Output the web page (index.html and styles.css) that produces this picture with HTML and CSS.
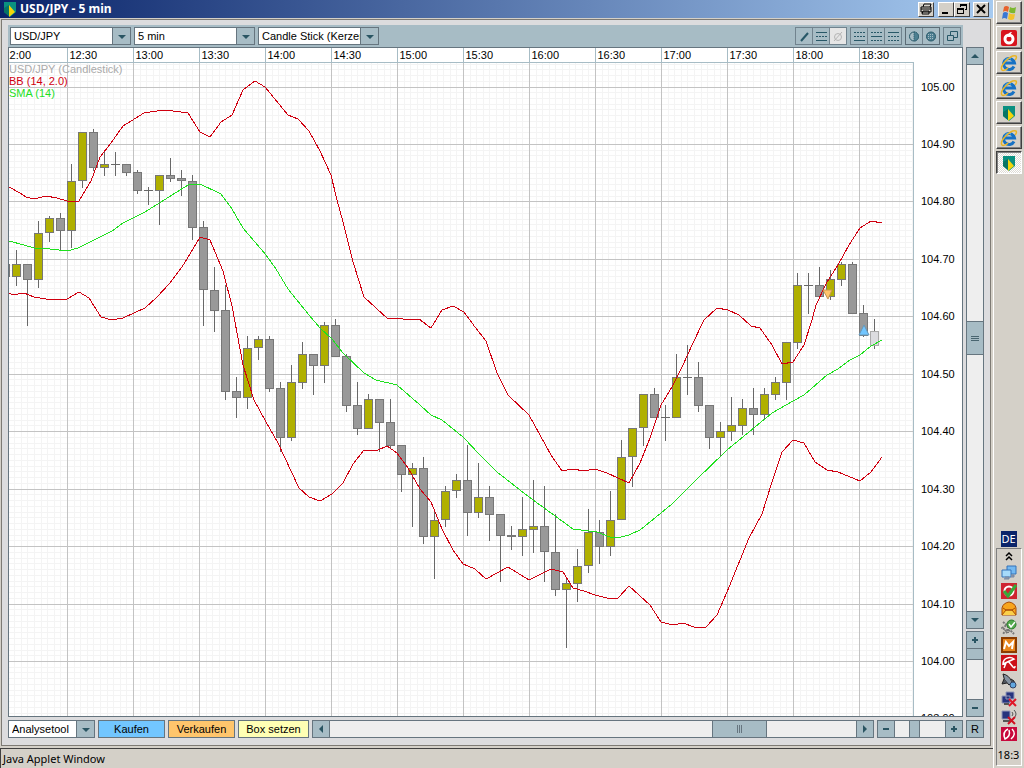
FILE: index.html
```
<!DOCTYPE html>
<html lang="de">
<head>
  <meta charset="UTF-8">
  <title>USD/JPY - 5 min</title>
  <link rel="stylesheet" href="styles.css">
</head>
<body>

  <svg class="defs" aria-hidden="true">
    <symbol id="shield" viewBox="1 0 14 16">
      <path d="M2 1h12v10l-6 5-6-5z" fill="#0a9080"/>
      <path d="M7 4l6 7-6 5z" fill="#f4d50a"/>
      <path d="M7 4v11l-5-4V7z" fill="#087564"/>
    </symbol>
    <symbol id="ie" viewBox="0 0 18 18">
      <path d="M14 12.500A5.500 5.500 0 1 1 14.500 9H5" fill="none" stroke="#1672c4" stroke-width="3"/>
      <path d="M5 7a4 4 0 0 1 6-2" fill="none" stroke="#6cc4f4" stroke-width="1"/>
      <path d="M2 16C-1 12 11 0 16 2c1 1 0 3-1 4M2 16c1 1 4 0 6-2" fill="none" stroke="#e9b526" stroke-width="1.500"/>
    </symbol>
  </svg>

  <main class="window">
    <header class="titlebar">
      <svg class="title-icon"><use href="#shield"/></svg>
      <h1>USD/JPY - 5 min</h1>
      <button class="win-btn win-print" aria-label="Drucken">
        <svg viewBox="0 0 14 12"><path d="M4 4l1-3h7l-1 3M2 4h10v5H2zM2 6h10M4 8h6v3H3z" fill="none" stroke="#000"/></svg>
      </button>
      <button class="win-btn" aria-label="Minimieren">
        <svg viewBox="0 0 14 12"><path d="M3 9h6v2H3z"/></svg>
      </button>
      <button class="win-btn" aria-label="Wiederherstellen">
        <svg viewBox="0 0 14 12"><path d="M5 1h7v6h-2V6h1V3H6v1H5zM2 5h7v6H2zm1 2v3h5V7z" fill-rule="evenodd"/></svg>
      </button>
      <button class="win-btn win-close" aria-label="Schließen">
        <svg viewBox="0 0 14 12"><path d="M3 2l8 8M11 2l-8 8" stroke="#000" stroke-width="2"/></svg>
      </button>
    </header>

    <section class="panel">
      <div class="toolbar">
        <span class="combo"><select aria-label="Instrument"><option>USD/JPY</option></select></span>
        <span class="combo"><select aria-label="Intervall"><option>5 min</option></select></span>
        <span class="combo"><select aria-label="Darstellung"><option>Candle Stick (Kerzenchart)</option></select></span>
        <div class="tools">
          <div class="tool-group">
            <button aria-label="Linie"><svg viewBox="0 0 16 16"><path d="M5 13l7-8" stroke-width="2"/></svg></button>
            <button aria-label="Kanal"><svg viewBox="0 0 16 16"><path d="M3 4.500h11M3 12.500h11"/><path d="M3 8.500h11" stroke-dasharray="2 1"/></svg></button>
            <button aria-label="Entfernen" disabled><svg viewBox="0 0 16 16"><circle cx="8" cy="9" r="3.500"/><path d="M4 13l8-9"/></svg></button>
          </div>
          <div class="tool-group">
            <button aria-label="Unten"><svg viewBox="0 0 16 16"><path d="M3 4.500h11M3 8.500h11" stroke-dasharray="2 1"/><path d="M3 12.500h11"/></svg></button>
            <button aria-label="Mitte"><svg viewBox="0 0 16 16"><path d="M3 4.500h11M3 12.500h11" stroke-dasharray="2 1"/><path d="M3 8.500h11"/></svg></button>
            <button aria-label="Oben"><svg viewBox="0 0 16 16"><path d="M3 8.500h11M3 12.500h11" stroke-dasharray="2 1"/><path d="M3 4.500h11"/></svg></button>
          </div>
          <div class="tool-group dark">
            <button aria-label="Halb"><svg viewBox="0 0 16 16"><circle cx="8" cy="8.500" r="4.500"/><path d="M8 4a4.500 4.500 0 0 1 0 9z" fill="#4d7f91" stroke-dasharray="1 1"/></svg></button>
            <button aria-label="Voll"><svg viewBox="0 0 16 16"><circle cx="8" cy="8.500" r="4.500" fill="#4d7f91"/><path d="M5 6.500h6M5 8.500h6M5 10.500h6" stroke="#a7bcc5" stroke-dasharray="1 1"/></svg></button>
          </div>
          <div class="tool-group">
            <button aria-label="Fenster"><svg viewBox="0 0 16 16"><path d="M6.500 7V3.500h7v6H10M3.500 7.500h6v5h-6z"/></svg></button>
          </div>
        </div>
      </div>

      <svg id="chart" class="chart"></svg>

      <div class="side">
        <div class="scroll vertical">
          <button class="up" aria-label="Nach oben"></button>
          <input type="range" class="scroll-v" aria-label="Preis verschieben" value="50">
          <button class="down" aria-label="Nach unten"></button>
        </div>
        <div class="scroll vertical zoom-v">
          <button class="plus" aria-label="Höhe vergrößern"></button>
          <input type="range" aria-label="Preis zoomen" value="0">
          <button class="minus" aria-label="Höhe verkleinern"></button>
        </div>
      </div>

      <div class="actions">
        <span class="combo tool-combo"><select aria-label="Analysetool"><option>Analysetool</option></select></span>
        <button class="action buy">Kaufen</button>
        <button class="action sell">Verkaufen</button>
        <button class="action box">Box setzen</button>
        <div class="scroll time-scroll">
          <button class="left" aria-label="Zurück"></button>
          <input type="range" class="scroll-h" aria-label="Zeit verschieben" value="81">
          <button class="right" aria-label="Weiter"></button>
        </div>
        <div class="scroll zoom-h">
          <button class="minus" aria-label="Breite verkleinern"></button>
          <input type="range" aria-label="Zeit zoomen" value="36">
          <button class="plus" aria-label="Breite vergrößern"></button>
        </div>
      </div>
      <button class="reset">R</button>
    </section>

    <footer class="status">Java Applet Window</footer>
  </main>

  <aside class="taskbar">
    <button class="task" aria-label="Start"><svg viewBox="0 0 18 18"><path d="M4 3q2-2 5 0L8 8Q5 6 3 8z" fill="#e8622c"/><path d="M10 3q3 2 6 0l-1 6q-3 1-6-1z" fill="#7cb82f"/><path d="M3 9q2-2 5 0l-1 6q-3-2-5 0z" fill="#3a78d4"/><path d="M9 9q3 2 6 1l-1 5q-3 2-6 0z" fill="#f2c22c"/></svg></button>
    <button class="task" aria-label="Vodafone"><svg viewBox="0 0 18 18"><rect x="1" y="1" width="16" height="16" rx="2" fill="#d8141c"/><circle cx="9" cy="10" r="4" fill="none" stroke="#fff" stroke-width="3"/><path d="M8 8q0-5 4-5-2 2-2 5" fill="#fff"/></svg></button>
    <button class="task" aria-label="Internet Explorer"><svg><use href="#ie"/></svg></button>
    <button class="task" aria-label="Internet Explorer"><svg><use href="#ie"/></svg></button>
    <button class="task" aria-label="Trading"><svg class="small"><use href="#shield"/></svg></button>
    <button class="task" aria-label="Internet Explorer"><svg><use href="#ie"/></svg></button>
    <button class="task pressed" aria-label="USD/JPY"><svg class="small"><use href="#shield"/></svg></button>

    <div class="lang">DE</div>
    <div class="tray">
      <svg class="chevrons" viewBox="0 0 16 10"><path d="M5 5l3-3 3 3M5 9l3-3 3 3" fill="none" stroke="#000" stroke-width="1.500"/></svg>
      <svg viewBox="0 0 16 16"><path d="M6 1h9v8H6z" fill="#73b9f2" stroke="#3472b8"/><path d="M1 5h9v7H1z" fill="#a6dafa" stroke="#3472b8"/><path d="M4 12h4v2H3M10 10h3v2h-3" fill="#8a98b0" stroke="#7888a0"/></svg>
      <svg viewBox="0 0 16 16"><path d="M0 0h16v16H0z" fill="#cf2430"/><circle cx="8" cy="8" r="4.500" fill="none" stroke="#fff" stroke-width="2"/><path d="M3 8l4 5 8-11" fill="none" stroke="#38a838" stroke-width="3"/></svg>
      <svg viewBox="0 0 16 16"><path d="M1 7q1-5 7-6 6 1 7 6v7H1z" fill="#f8a51c" stroke="#a84b04"/><path d="M1 14l4-5h6l4 5" fill="#fbd04a" stroke="#a84b04"/><path d="M2 7l3 2h6l3-2" fill="none" stroke="#a84b04"/></svg>
      <svg viewBox="0 0 16 16"><path d="M2 3l4 3-5 3 4 2-3 4M7 7v7M5 14l4-3 4 4" fill="none" stroke="#777" stroke-width="2" stroke-dasharray="2 1"/><circle cx="10.500" cy="5.500" r="4.500" fill="#52a94b" stroke="#2c7c2c"/><path d="M8 5l2 3 4-5" fill="none" stroke="#fff" stroke-width="1.500"/></svg>
      <svg viewBox="0 0 16 16"><rect x="1" y="1" width="14" height="14" fill="#e8851c" stroke="#8b3c00" stroke-width="2"/><path d="M3 12l2-7 3 4 4-4-1 7" fill="none" stroke="#fff" stroke-width="2"/></svg>
      <svg viewBox="0 0 16 16"><path d="M0 0h16v16H0z" fill="#cc1018"/><path d="M2 9C2 3 9 1 13 4zM7 6l5 6q2 2 2-1M5 8l-2 5" fill="none" stroke="#fff" stroke-width="1.500"/></svg>
      <svg viewBox="0 0 16 16"><path d="M2 1q6 1 9 8l-3 3Q2 7 2 1z" fill="#8492a0" stroke="#222"/><path d="M3 6l-2 5 5-1M10 6l3 2 1 5-3-2" fill="#50565e" stroke="#222"/><circle cx="12" cy="12" r="3" fill="#62a8e0" stroke="#346"/></svg>
      <svg viewBox="0 0 16 16"><path d="M5 1h8v7H5zM1 5h8v7H1z" fill="#26347e" stroke="#9298b8"/><path d="M3 13h5" stroke="#555" stroke-width="2"/><path d="M8 8l7 7M15 8l-7 7" stroke="#e01828" stroke-width="2"/></svg>
      <svg viewBox="0 0 16 16"><path d="M1 2h8v8H1z" fill="#26347e" stroke="#9298b8"/><path d="M2 12h7" stroke="#555" stroke-width="2"/><path d="M11 3q2 2 0 4M13 1q4 4 0 8" fill="none" stroke="#555"/><path d="M7 8l7 7M14 8l-7 7" stroke="#d01020" stroke-width="2"/></svg>
      <svg viewBox="0 0 16 16"><path d="M0 0h16v14H0z" fill="#c8083c"/><path d="M7 2Q1 5 4 12q6-3 4-9M11 2q5 5-1 10" fill="none" stroke="#fff" stroke-width="1.500"/></svg>
      <time>18:3</time>
    </div>
  </aside>

  <script src="chart.js"></script>
</body>
</html>
```
FILE: styles.css
```
* {
  box-sizing: border-box;
}

body {
  display: flex;
  height: 100vh;
  margin: 0;
  overflow: hidden;
  background: #d4d0c8;
  color: #000;
  font: 11px/14px "Liberation Sans", Arial, sans-serif;
}

button,
select,
input {
  margin: 0;
  padding: 0;
  border-radius: 0;
  color: inherit;
  font: inherit;
}

.defs {
  position: absolute;
  width: 0;
  height: 0;
}

.window {
  display: flex;
  flex: 1;
  flex-direction: column;
  min-width: 0;
}

/* title bar */

.titlebar {
  display: flex;
  align-items: center;
  height: 18px;
  padding: 0 4px 0 3px;
  background: linear-gradient(to right, #0a246a, #a6caf0);
}

.title-icon {
  width: 14px;
  height: 16px;
}

.titlebar h1 {
  flex: 1;
  margin: 0 0 0 3px;
  color: #fff;
  font: bold 12px/16px "Noto Sans", Tahoma, sans-serif;
}

.win-btn {
  width: 16px;
  height: 15px;
  border: 1px solid;
  border-color: #fff #404040 #404040 #fff;
  background: #d4d0c8;
}

.win-btn svg {
  display: block;
  width: 14px;
  height: 12px;
}

.win-print {
  margin-right: 4px;
}

.win-close {
  margin-left: 3px;
}

/* applet panel */

.panel {
  display: grid;
  flex: 1;
  grid-template-columns: 1fr 18px;
  grid-template-rows: 22px 1fr 21px;
  column-gap: 3px;
  min-height: 0;
  margin: 1px 2px 0 1px;
  padding: 5px 6px 7px;
  border: 1px solid #7d7a74;
  background: #dcdcde;
}

.toolbar {
  display: flex;
  gap: 3px;
  padding: 2px;
  background: #a7bcc5;
}

.combo {
  position: relative;
  width: 121px;
  height: 18px;
}

.combo select {
  width: 100%;
  height: 18px;
  padding: 0 14px 0 3px;
  border: 1px solid #66757f;
  background: #fff;
  appearance: none;
}

/* drop-down button over the right end of the select */
.combo::after {
  position: absolute;
  top: 1px;
  right: 1px;
  width: 17px;
  height: 16px;
  border-left: 1px solid #66757f;
  background: #a7bcc5;
  content: "";
  pointer-events: none;
}

.combo::before {
  position: absolute;
  z-index: 1;
  top: 8px;
  right: 5px;
  border: 4px solid transparent;
  border-top-color: #2a5563;
  border-bottom: 0;
  content: "";
  pointer-events: none;
}

.tools {
  display: flex;
  gap: 3px;
  margin-left: auto;
}

.tool-group {
  display: flex;
  border: 1px solid #71838e;
}

.tool-group button {
  width: 17px;
  height: 16px;
  border: 0;
  border-right: 1px solid #71838e;
  background: #a7bcc5;
}

.tool-group button:last-child {
  width: 16px;
  border-right: 0;
}

.tool-group.dark {
  border-color: #5c6c76;
}

.tool-group button:disabled {
  background: #e6e6e6;
}

.tool-group svg {
  display: block;
  width: 16px;
  height: 16px;
  fill: none;
  stroke: #285868;
}

.tool-group button:disabled svg {
  stroke: #b5b5b5;
}

/* chart */

.chart {
  grid-row: 2;
  width: 100%;
  height: 100%;
  border: 1px solid #66757f;
  background: #fff;
}

.chart .minor {
  stroke: #f4f4f4;
}

.chart .major {
  stroke: #c3c3c3;
}

.chart .frame {
  stroke: #a7bcc5;
}

.chart .wick {
  stroke: #686868;
}

.chart .candle {
  stroke: #777;
}

.chart .rise {
  fill: #b0b000;
}

.chart .fall {
  fill: #999;
}

.chart .open {
  fill: #dcdce0;
  stroke: #aaa;
}

.chart .band {
  fill: none;
  stroke: #d00010;
}

.chart .sma {
  fill: none;
  stroke: #1ee01e;
}

.chart .legend-name {
  fill: #aaa;
}

.chart .legend-bb {
  fill: #d00010;
}

.chart .legend-sma {
  fill: #1ee01e;
}

/* scrollbars and zoom sliders */

.side {
  display: flex;
  grid-row: 2;
  flex-direction: column;
  gap: 2px;
}

.scroll {
  display: flex;
  height: 18px;
  border: 1px solid #66757f;
  background: #eee;
}

.scroll button {
  flex: none;
  width: 17px;
  height: 16px;
  border: 0;
  border-right: 1px solid #66757f;
  background: #a7bcc5;
}

.scroll button:last-child {
  border-right: 0;
  border-left: 1px solid #66757f;
}

.scroll input {
  flex: 1;
  width: 0;
  min-width: 0;
  background: #eee;
  appearance: none;
}

.scroll.vertical {
  flex: 1;
  flex-direction: column;
  width: 18px;
  min-height: 0;
}

.scroll.vertical button {
  width: 16px;
  height: 17px;
  border: 0;
  border-bottom: 1px solid #66757f;
}

.scroll.vertical button:last-child {
  border-top: 1px solid #66757f;
  border-bottom: 0;
}

.scroll.vertical input {
  width: 16px;
  height: 0;
  min-height: 0;
  writing-mode: vertical-lr;
}

.scroll.zoom-v {
  flex: none;
  height: 86px;
}

.time-scroll {
  flex: 1;
}

.zoom-h {
  width: 86px;
}

.scroll input::-webkit-slider-thumb {
  width: 11px;
  height: 16px;
  border: solid #66757f;
  border-width: 0 1px;
  background: #a7bcc5;
  appearance: none;
}

.scroll.vertical input::-webkit-slider-thumb {
  width: 16px;
  height: 11px;
  border-width: 0 0 1px;
}

.scroll .scroll-h::-webkit-slider-thumb {
  width: 55px;
  background: repeating-linear-gradient(to right, #66757f 0 1px, #a7bcc5 1px 2px) center / 5px 8px no-repeat #a7bcc5;
}

.scroll.vertical .scroll-v::-webkit-slider-thumb {
  height: 34px;
  border-width: 1px 0;
  background: repeating-linear-gradient(to bottom, #496570 0 1px, #a7bcc5 1px 2px) center / 8px 5px no-repeat #a7bcc5;
}

.scroll button::before {
  display: block;
  width: 0;
  height: 0;
  margin: auto;
  border: 4px solid transparent;
  content: "";
}

.scroll .up::before {
  border-top: 0;
  border-bottom-color: #2a5563;
}

.scroll .down::before {
  border-top-color: #2a5563;
  border-bottom: 0;
}

.scroll .left::before {
  border-right-color: #2a5563;
  border-left: 0;
}

.scroll .right::before {
  border-right: 0;
  border-left-color: #2a5563;
}

.scroll .plus::before,
.scroll .minus::before {
  width: 6px;
  height: 6px;
  border: 0;
  background: linear-gradient(#2a5563, #2a5563) center / 6px 2px no-repeat;
}

.scroll .plus::before {
  background: linear-gradient(#2a5563, #2a5563) center / 6px 2px no-repeat, linear-gradient(#2a5563, #2a5563) center / 2px 6px no-repeat;
}

/* bottom row */

.actions {
  display: flex;
  grid-row: 3;
  gap: 3px;
  min-width: 0;
  margin-top: 3px;
}

.tool-combo {
  width: 87px;
}

.action {
  width: 67px;
  height: 18px;
  border: 1px solid #66757f;
}

.buy {
  background: #72c6ff;
}

.sell {
  background: #ffc56c;
}

.box {
  width: 71px;
  background: #ffffb4;
}

.reset {
  grid-row: 3;
  grid-column: 2;
  height: 18px;
  margin-top: 3px;
  border: 1px solid #66757f;
  background: #a7bcc5;
}

.status {
  height: 20px;
  margin-top: 2px;
  padding: 2px;
  border-top: 1px solid #404040;
  border-left: 1px solid #404040;
  font: 11px/15px "Noto Sans", Tahoma, sans-serif;
}

/* taskbar */

.taskbar {
  display: flex;
  flex-direction: column;
  align-items: center;
  gap: 2px;
  width: 31px;
  padding: 1px 2px 2px 1px;
  border-left: 1px solid #fff;
  font: 11px/15px "Noto Sans", Tahoma, sans-serif;
}

.task {
  display: flex;
  align-items: center;
  justify-content: center;
  width: 26px;
  height: 23px;
  border: 1px solid;
  border-color: #fff #404040 #404040 #fff;
  background: #d4d0c8;
  box-shadow: inset -1px -1px #808080;
}

.task svg {
  width: 18px;
  height: 18px;
}

.task svg.small {
  width: 14px;
  height: 16px;
}

.task.pressed {
  border-color: #404040 #fff #fff #404040;
  background: repeating-conic-gradient(#fff 0 25%, #dedbd5 0 50%) 0 0 / 2px 2px;
  box-shadow: inset 1px 1px #808080;
}

.lang {
  width: 16px;
  margin-top: auto;
  background: #0a246a;
  color: #fff;
  line-height: 16px;
  text-align: center;
}

.tray {
  display: flex;
  flex-direction: column;
  align-items: center;
  gap: 2px;
  width: 26px;
  margin-top: -1px;
  padding-bottom: 3px;
  border: 1px solid;
  border-color: #808080 #fff #fff #808080;
}

.tray svg {
  width: 16px;
  height: 16px;
}

.tray .chevrons {
  height: 14px;
}

.tray time {
  margin-top: 2px;
  white-space: nowrap;
}
```
FILE: chart.js
```
// candles: top and bottom of the body, high, low, type (r = rise, f = fall, o = still open)
const candles = [
  [264, 277, 264, 277, 'f'], [264, 277, 250, 286, 'r'], [264, 280, 264, 326, 'f'], [233, 280, 221, 288, 'r'],
  [218, 233, 216, 242, 'r'], [218, 231, 213, 251, 'f'], [181, 231, 164, 248, 'r'], [132, 181, 132, 188, 'r'],
  [132, 168, 129, 171, 'f'], [164, 168, 152, 176, 'r'], [164, 164, 152, 176, 'f'], [164, 173, 164, 176, 'f'],
  [172, 191, 170, 194, 'f'], [190, 190, 187, 205, 'f'], [175, 191, 175, 225, 'r'], [175, 179, 158, 182, 'f'],
  [178, 181, 170, 196, 'f'], [181, 228, 175, 240, 'f'], [227, 290, 221, 326, 'f'], [290, 311, 267, 332, 'f'],
  [310, 392, 285, 400, 'f'], [391, 398, 377, 418, 'f'], [348, 398, 336, 409, 'r'], [339, 348, 336, 360, 'r'],
  [339, 389, 336, 392, 'f'], [388, 438, 382, 452, 'f'], [382, 438, 365, 441, 'r'], [354, 383, 342, 389, 'r'],
  [354, 366, 354, 395, 'f'], [325, 366, 322, 383, 'r'], [325, 357, 319, 357, 'f'], [356, 406, 354, 412, 'f'],
  [405, 429, 382, 435, 'f'], [399, 429, 394, 429, 'r'], [399, 423, 399, 452, 'f'], [422, 446, 399, 448, 'f'],
  [445, 475, 445, 492, 'f'], [468, 475, 463, 527, 'r'], [468, 537, 457, 544, 'f'], [520, 537, 512, 579, 'r'],
  [491, 520, 486, 527, 'r'], [480, 491, 474, 498, 'r'], [480, 513, 445, 536, 'f'], [497, 513, 463, 518, 'r'],
  [497, 515, 486, 541, 'f'], [514, 536, 514, 582, 'f'], [535, 537, 526, 550, 'f'], [529, 537, 497, 556, 'r'],
  [526, 530, 480, 553, 'r'], [526, 552, 486, 582, 'f'], [552, 590, 514, 596, 'f'], [583, 590, 578, 648, 'r'],
  [566, 584, 549, 602, 'r'], [532, 566, 509, 573, 'r'], [532, 547, 520, 564, 'f'], [520, 547, 491, 556, 'r'],
  [457, 520, 440, 520, 'r'], [428, 457, 428, 487, 'r'], [394, 428, 394, 446, 'r'], [394, 418, 388, 418, 'f'],
  [417, 417, 405, 441, 'f'], [377, 418, 354, 418, 'r'], [377, 377, 345, 395, 'f'], [377, 406, 362, 412, 'f'],
  [405, 438, 405, 449, 'f'], [431, 438, 422, 457, 'r'], [425, 432, 397, 441, 'r'], [408, 426, 399, 435, 'r'],
  [408, 415, 388, 435, 'f'], [394, 415, 388, 420, 'r'], [382, 395, 377, 400, 'r'], [342, 383, 342, 400, 'r'],
  [285, 343, 273, 349, 'r'], [285, 285, 273, 314, 'f'], [285, 297, 267, 297, 'f'], [279, 297, 270, 300, 'r'],
  [264, 280, 262, 286, 'r'], [264, 314, 262, 314, 'f'], [313, 336, 305, 337, 'f'], [331, 346, 319, 349, 'o']
];

const upper = '9,187 20,193 26,197 34,199 46,196 57,198 67,201 79,201 91,181 100,157 111,143 123,126 144,113 157,111 166,110 188,113 200,132 210,137 221,122 232,115 243,90 255,81 265,87 288,115 298,119 309,131 320,151 331,175 337,200 343,222 353,262 364,297 376,308 387,318 397,318 409,320 419,319 431,328 442,310 453,306 464,312 475,327 486,341 497,373 508,395 529,415 540,435 551,455 562,471 573,469 584,471 595,469 607,473 629,483 640,463 650,438 661,405 672,387 683,365 692,345 704,320 717,308 728,310 739,315 751,326 760,328 772,345 782,364 793,362 804,345 812,320 816,305 827,282 838,265 849,245 860,228 871,221 882,223';
const lower = '9,293 13,295 24,293 34,297 46,299 56,300 67,299 79,292 89,298 101,317 112,320 123,318 145,308 157,297 170,283 182,267 190,254 200,237 210,240 223,271 232,306 243,365 254,400 266,422 278,443 299,488 309,497 320,501 332,494 343,483 353,464 364,450 376,451 387,446 397,453 408,468 420,489 431,502 442,529 453,550 463,564 475,569 486,579 497,573 508,567 529,580 551,569 563,572 573,588 584,591 595,595 607,598 618,598 629,586 650,605 661,622 673,625 683,623 694,627 706,627 717,615 727,592 749,538 762,514 772,482 782,452 793,440 804,443 815,462 827,470 838,472 860,481 871,472 882,457';
const sma = '9,241 24,245 34,248 50,249 67,251 78,248 112,231 123,223 145,212 188,185 200,184 221,194 232,209 243,228 266,255 276,269 288,289 309,315 320,328 332,339 343,353 364,373 376,380 397,385 420,405 431,415 442,420 463,437 480,455 497,472 529,497 551,513 573,529 597,532 610,537 617,538 629,535 640,530 661,513 672,504 694,482 727,450 749,432 772,413 793,401 804,395 827,375 838,369 850,360 860,355 871,346 882,340';

const chart = document.getElementById('chart');
const LEFT = 9;
const TOP = 48;
const HEAD = 62;
const STEP = 57.45;

function line(x1, y1, x2, y2, cls) {
  return `<path class="${cls}" d="M${x1} ${y1}L${x2} ${y2}"/>`;
}

function draw() {
  const right = LEFT + chart.clientWidth - 49;
  const bottom = TOP + chart.clientHeight;
  let grid = '';
  let labels = '';
  let bars = '';

  for (let x = 1.5, i = 0; x < right; x += 6.6, i++) {
    if (i % 10) grid += line(Math.floor(x) + 0.5, HEAD, Math.floor(x) + 0.5, bottom, 'minor');
  }
  for (let y = 87 - STEP, i = 0; y < bottom; y += STEP / 10, i++) {
    if (i % 10 && y > HEAD) grid += line(LEFT, Math.floor(y) + 0.5, right, Math.floor(y) + 0.5, 'minor');
  }
  for (let i = 0; 1.5 + i * 66 < right; i++) {
    const x = 1.5 + i * 66;
    grid += line(x, HEAD, x, bottom, 'major') + line(x, TOP, x, HEAD, 'frame');
    labels += `<text x="${x + 2}" y="59">${12 + Math.floor(i / 2)}:${i % 2 ? '30' : '00'}</text>`;
  }
  for (let i = 0; 80 + i * STEP < bottom; i++) {
    const y = Math.floor(87 + i * STEP);
    grid += line(LEFT, y + 0.5, right, y + 0.5, 'major');
    labels += `<text x="${right + 8}" y="${y + 4}">${(105 - i / 10).toFixed(2)}</text>`;
  }

  candles.forEach(([top, base, high, low, type], i) => {
    const x = 5.5 + i * 11;
    const cls = { r: 'rise', f: 'fall', o: 'open' }[type];
    bars += line(x, high, x, low, 'wick');
    if (top === base) {
      bars += line(x - 4.5, top + 0.5, x + 4.5, top + 0.5, 'wick');
    } else {
      bars += `<rect class="candle ${cls}" x="${x - 4}" y="${top + 0.5}" width="8" height="${base - top - 1}"/>`;
    }
  });

  chart.innerHTML = `
    <clipPath id="plot"><rect x="${LEFT}" y="${TOP}" width="${right - LEFT}" height="${bottom - TOP}"/></clipPath>
    <g transform="translate(${-LEFT} ${-TOP})">
      <g shape-rendering="crispEdges">${grid}
        ${line(LEFT, HEAD + 0.5, right, HEAD + 0.5, 'frame')}
        ${line(right + 0.5, HEAD, right + 0.5, bottom, 'frame')}
      </g>
      ${labels}
      <g clip-path="url(#plot)">
        <g shape-rendering="crispEdges">${bars}
          <polyline class="band" points="${upper}"/>
          <polyline class="band" points="${lower}"/>
          <polyline class="sma" points="${sma}"/>
        </g>
        <path d="M823 290h9l-4 9z" fill="#ffc56c" stroke="#c89850"/>
        <path d="M859 335h10l-5-10z" fill="#72c6ff" stroke="#6898b8"/>
      </g>
      <text class="legend-name" x="9" y="73">USD/JPY (Candlestick)</text>
      <text class="legend-bb" x="9" y="85">BB (14, 2.0)</text>
      <text class="legend-sma" x="9" y="97">SMA (14)</text>
    </g>`;
}

draw();
window.addEventListener('resize', draw);
```
